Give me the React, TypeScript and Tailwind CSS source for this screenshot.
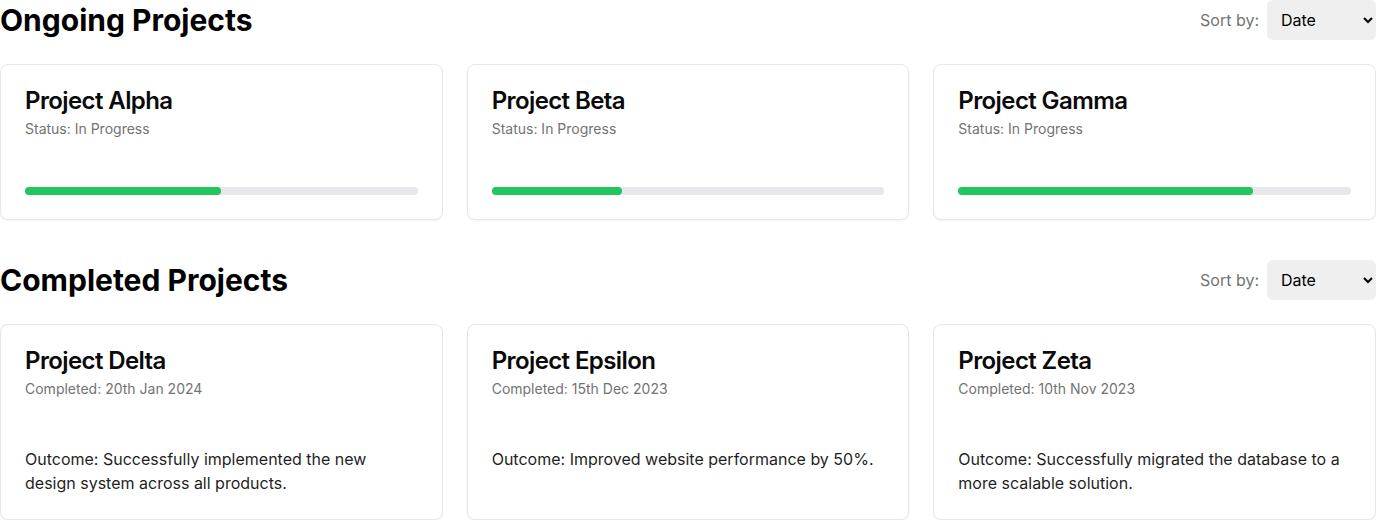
interface Ongoing {
  name: string;
  progress: number;
}

interface Completed {
  name: string;
  date: string;
  outcome: string;
}

const ongoing: Ongoing[] = [
  { name: "Project Alpha", progress: 50 },
  { name: "Project Beta", progress: 33.3 },
  { name: "Project Gamma", progress: 75 },
];

const completed: Completed[] = [
  {
    name: "Project Delta",
    date: "20th Jan 2024",
    outcome: "Successfully implemented the new design system across all products.",
  },
  {
    name: "Project Epsilon",
    date: "15th Dec 2023",
    outcome: "Improved website performance by 50%.",
  },
  {
    name: "Project Zeta",
    date: "10th Nov 2023",
    outcome: "Successfully migrated the database to a more scalable solution.",
  },
];

const SectionHeader = ({ title }: { title: string }) => {
  return (
    <div className="flex items-center justify-between mb-6">
      <h2 className="text-3xl font-bold text-black">{title}</h2>
      <div className="flex items-center gap-2">
        <span className="text-base text-[#737373]">Sort by:</span>
        <select className="h-10 w-[109px] rounded-md bg-[#efefef] px-2.5 text-base text-black outline-none">
          <option>Date</option>
          <option>Name</option>
        </select>
      </div>
    </div>
  );
};

const Card = ({ title, sub, children }: { title: string; sub: string; children: React.ReactNode }) => {
  return (
    <div className="rounded-lg border border-[#e5e7eb] bg-white shadow-xs">
      <div className="flex flex-col gap-1.5 p-6">
        <h3 className="text-2xl font-semibold leading-none tracking-tight text-[#0a0a0a]">{title}</h3>
        <p className="text-sm text-[#737373]">{sub}</p>
      </div>
      <div className="p-6">{children}</div>
    </div>
  );
};

const App = () => {
  return (
    <div className="w-[1376px] bg-white" style={{ fontFamily: "Inter, 'Noto Sans', sans-serif" }}>
      <section className="mb-10">
        <SectionHeader title="Ongoing Projects" />
        <div className="grid grid-cols-3 gap-6">
          {ongoing.map((p) => (
            <Card key={p.name} title={p.name} sub="Status: In Progress">
              <div className="h-2 w-full rounded-full bg-[#e5e7eb]">
                <div className="h-2 rounded-full bg-[#22c55e]" style={{ width: `${p.progress}%` }} />
              </div>
            </Card>
          ))}
        </div>
      </section>
      <section>
        <SectionHeader title="Completed Projects" />
        <div className="grid grid-cols-3 gap-6">
          {completed.map((p) => (
            <Card key={p.name} title={p.name} sub={`Completed: ${p.date}`}>
              <p className="text-base text-[#1f1f1f]">Outcome: {p.outcome}</p>
            </Card>
          ))}
        </div>
      </section>
    </div>
  );
};

export default App;
